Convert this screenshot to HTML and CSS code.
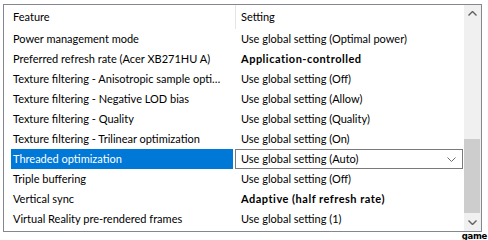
FILE: index.html
```html
<!DOCTYPE html>
<html lang="en">
<head>
    <meta charset="UTF-8">
    <title>Program settings</title>
    <link rel="stylesheet" href="styles.css">
</head>
<body>
    <div class="list">
        <div class="list-body">
            <div class="head">
                <div class="col-feature">Feature</div>
                <div class="col-setting">Setting</div>
            </div>
            <div class="row">
                <div class="feature">Power management mode</div>
                <div class="setting">Use global setting (Optimal power)</div>
            </div>
            <div class="row">
                <div class="feature">Preferred refresh rate (Acer XB271HU A)</div>
                <div class="setting bold">Application-controlled</div>
            </div>
            <div class="row">
                <div class="feature">Texture filtering - Anisotropic sample opti…</div>
                <div class="setting">Use global setting (Off)</div>
            </div>
            <div class="row">
                <div class="feature">Texture filtering - Negative LOD bias</div>
                <div class="setting">Use global setting (Allow)</div>
            </div>
            <div class="row">
                <div class="feature">Texture filtering - Quality</div>
                <div class="setting">Use global setting (Quality)</div>
            </div>
            <div class="row">
                <div class="feature">Texture filtering - Trilinear optimization</div>
                <div class="setting">Use global setting (On)</div>
            </div>
            <div class="row selected">
                <div class="feature">Threaded optimization</div>
                <div class="combo">
                    <span>Use global setting (Auto)</span>
                    <svg width="9" height="5" viewBox="0 0 9 5"><path d="M0.5 0.5 L4.5 4.5 L8.5 0.5" fill="none" stroke="#6d6d6d" stroke-width="1"/></svg>
                </div>
            </div>
            <div class="row">
                <div class="feature">Triple buffering</div>
                <div class="setting">Use global setting (Off)</div>
            </div>
            <div class="row">
                <div class="feature">Vertical sync</div>
                <div class="setting bold">Adaptive (half refresh rate)</div>
            </div>
            <div class="row">
                <div class="feature">Virtual Reality pre-rendered frames</div>
                <div class="setting">Use global setting (1)</div>
            </div>
        </div>
        <div class="scrollbar">
            <div class="arrow">
                <svg width="9" height="5" viewBox="0 0 9 5"><path d="M0.5 4.5 L4.5 0.5 L8.5 4.5" fill="none" stroke="#606060" stroke-width="1.4"/></svg>
            </div>
            <div class="track">
                <div class="thumb"></div>
            </div>
            <div class="arrow">
                <svg width="9" height="5" viewBox="0 0 9 5"><path d="M0.5 0.5 L4.5 4.5 L8.5 0.5" fill="none" stroke="#606060" stroke-width="1.4"/></svg>
            </div>
        </div>
    </div>
    <div class="mark">game</div>
</body>
</html>
```

FILE: styles.css
```css
body {
    margin: 0;
    background-color: #fff;
    font-family: Lato, "Noto Sans", sans-serif;
    font-size: 11px;
    color: #000;
}
.list {
    display: flex;
    width: 479px;
    height: 228px;
    margin: 4px 0 0 3px;
    border: 1px solid #828790;
    box-sizing: border-box;
}
.list-body {
    flex: 1;
    overflow: hidden;
}
.head {
    display: flex;
    height: 24px;
    line-height: 24px;
}
.col-feature {
    width: 222px;
    padding-left: 9px;
    border-right: 1px solid #e5e5e5;
}
.col-setting {
    padding-left: 5px;
}
.row {
    display: flex;
    height: 20px;
    line-height: 20px;
}
.feature {
    width: 220px;
    margin-left: 7px;
    padding-left: 2px;
    white-space: nowrap;
    overflow: hidden;
}
.setting {
    margin-left: 2px;
    padding-left: 6px;
    white-space: nowrap;
}
.bold {
    font-weight: bold;
    letter-spacing: 0.5px;
}
.selected .feature {
    background-color: #0078d7;
    color: #fff;
}
.combo {
    display: flex;
    align-items: center;
    justify-content: space-between;
    width: 228px;
    margin-left: 2px;
    padding: 0 5px 0 5px;
    border: 1px solid #7a7a7a;
    box-sizing: border-box;
    line-height: 18px;
}
.combo svg {
    margin-right: 1px;
}
.scrollbar {
    display: flex;
    flex-direction: column;
    width: 17px;
    background-color: #f0f0f0;
}
.arrow {
    height: 17px;
    display: flex;
    align-items: center;
    justify-content: center;
}
.track {
    flex: 1;
    display: flex;
    flex-direction: column;
    justify-content: flex-end;
}
.thumb {
    height: 74px;
    margin: 0 1px 1px 0;
    background-color: #cdcdcd;
}
.mark {
    width: 487px;
    text-align: right;
    font-family: "DejaVu Sans", sans-serif;
    font-size: 8.5px;
    font-weight: bold;
    line-height: 9px;
    letter-spacing: -0.3px;
}
```
